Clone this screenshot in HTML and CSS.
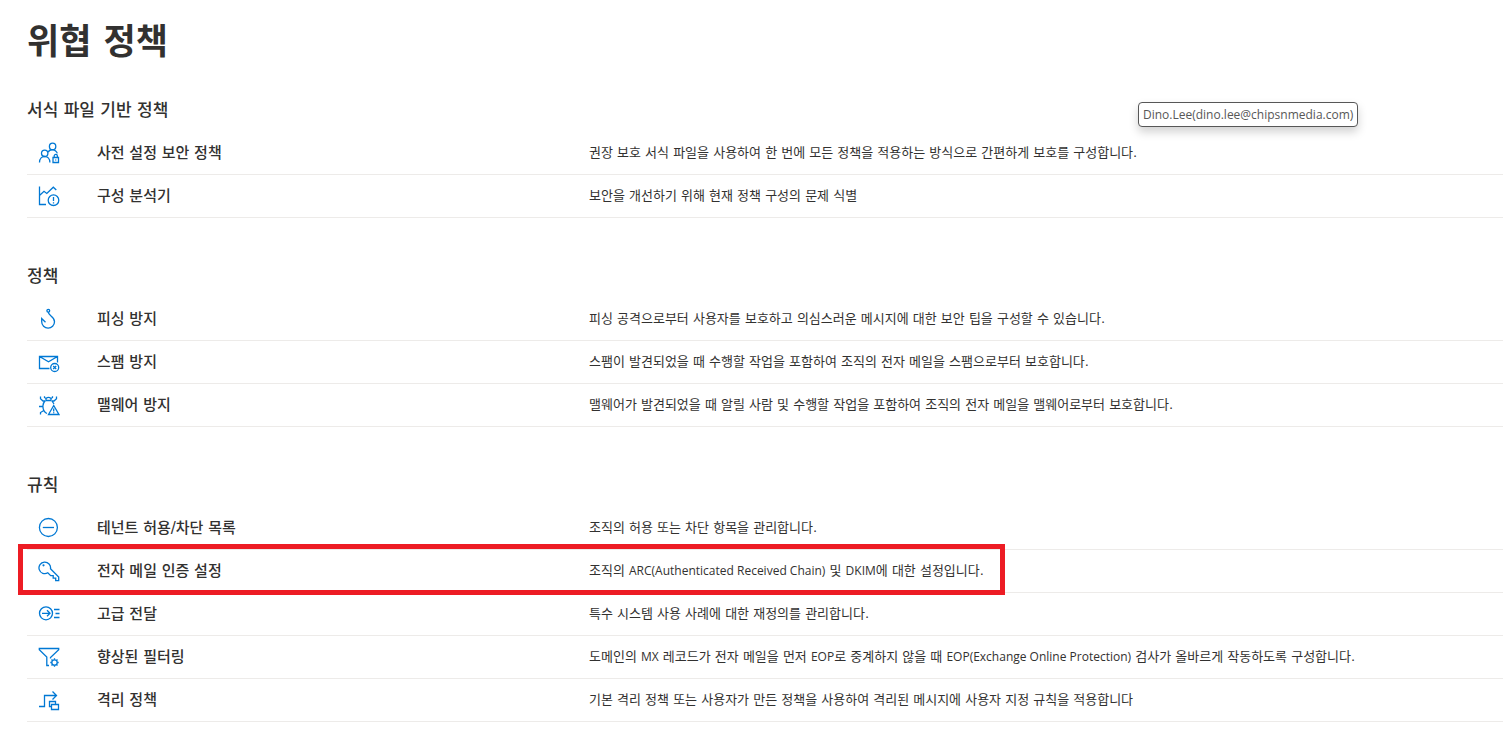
FILE: index.html
```
<!DOCTYPE html>
<html lang="ko">
<head>
<meta charset="utf-8">
<title>위협 정책</title>
<link rel="stylesheet" href="styles.css">
</head>
<body>
<main class="page">
  <h1 class="page-title">위협 정책</h1>
  <div class="tooltip" role="tooltip">Dino.Lee(dino.lee@chipsnmedia.com)</div>

  <section class="group">
    <h2 class="group-title" id="g1">서식 파일 기반 정책</h2>
    <table class="policies" aria-labelledby="g1">
      <tr>
        <td class="icon-cell"><svg class="icon" viewBox="0 0 22 22" aria-hidden="true"><circle cx="14.6" cy="4.4" r="3.2"/><circle cx="6.7" cy="11.3" r="3.2"/><path d="M1.5 20.5c0-8 10.4-8 10.4 0M10.3 10.2c1-3.4 7.6-3.4 9 1.2M15 15.500h5.500v5H15zM16.200 15.500v-1.500a1.600 1.600 0 0 1 3.200 0v1.500M17.700 17.500v1"/></svg></td>
        <td class="name-cell"><a class="name" href="#preset">사전 설정 보안 정책</a></td>
        <td class="desc-cell">권장 보호 서식 파일을 사용하여 한 번에 모든 정책을 적용하는 방식으로 간편하게 보호를 구성합니다.</td>
      </tr>
      <tr>
        <td class="icon-cell"><svg class="icon" viewBox="0 0 22 22" aria-hidden="true"><path d="M1.500 1.500v18H8M1.500 10.500L6 6.300l2.800 2.200 6.500-6.300 3 2.800M15.500 12v4M15.500 17.200v1.300"/><circle cx="15.500" cy="15.200" r="5.300"/></svg></td>
        <td class="name-cell"><a class="name" href="#analyzer">구성 분석기</a></td>
        <td class="desc-cell">보안을 개선하기 위해 현재 정책 구성의 문제 식별</td>
      </tr>
    </table>
  </section>

  <section class="group">
    <h2 class="group-title" id="g2">정책</h2>
    <table class="policies" aria-labelledby="g2">
      <tr>
        <td class="icon-cell"><svg class="icon" viewBox="0 0 22 22" aria-hidden="true"><circle cx="10.300" cy="2.700" r="1.400"/><path d="M10.300 4.100c0 3.900 6.200 4.300 6.200 9.700a6.400 6.400 0 0 1-12.800 0v-3.300l3.800 3.800"/></svg></td>
        <td class="name-cell"><a class="name" href="#phishing">피싱 방지</a></td>
        <td class="desc-cell">피싱 공격으로부터 사용자를 보호하고 의심스러운 메시지에 대한 보안 팁을 구성할 수 있습니다.</td>
      </tr>
      <tr>
        <td class="icon-cell"><svg class="icon" viewBox="0 0 22 22" aria-hidden="true"><path d="M11.500 17.500h-10v-12h18v6M1.500 5.500l9 5.200 9-5.200M15.200 15l3 3M18.200 15l-3 3"/><circle cx="16.700" cy="16.500" r="4"/></svg></td>
        <td class="name-cell"><a class="name" href="#spam">스팸 방지</a></td>
        <td class="desc-cell">스팸이 발견되었을 때 수행할 작업을 포함하여 조직의 전자 메일을 스팸으로부터 보호합니다.</td>
      </tr>
      <tr>
        <td class="icon-cell"><svg class="icon" viewBox="0 0 22 22" aria-hidden="true"><path d="M6.500 2.200v1.300l1.500 1v2h5v-2l1.500-1V2.200M8 4.500c1.500-1.400 3.500-1.400 5 0M2.500 2.500v2.300L5 7h2M18.500 2.500v2.300L16 7h-2M7.200 6.800c-2.700 2.600-3 7-1 10.400.7 1.200 1.500 1.800 2.800 2.300M1 12.500h3.800M2.500 20.500v-2l3.300-2M14 7l2 3M15.700 11.500l-5.200 9h10.400zM15.700 14.500v3M15.700 18.300v1"/></svg></td>
        <td class="name-cell"><a class="name" href="#malware">맬웨어 방지</a></td>
        <td class="desc-cell">맬웨어가 발견되었을 때 알릴 사람 및 수행할 작업을 포함하여 조직의 전자 메일을 맬웨어로부터 보호합니다.</td>
      </tr>
    </table>
  </section>

  <section class="group">
    <h2 class="group-title" id="g3">규칙</h2>
    <table class="policies" aria-labelledby="g3">
      <tr>
        <td class="icon-cell"><svg class="icon" viewBox="0 0 22 22" aria-hidden="true"><circle cx="10.400" cy="10.500" r="9"/><path d="M4.800 10.500H16"/></svg></td>
        <td class="name-cell"><a class="name" href="#tenant">테넌트 허용/차단 목록</a></td>
        <td class="desc-cell">조직의 허용 또는 차단 항목을 관리합니다.</td>
      </tr>
      <tr class="highlighted">
        <td class="icon-cell"><svg class="icon" viewBox="0 0 22 22" aria-hidden="true"><path d="M12.500 8.800l8.200 8.200v3.700h-3v-2.500h-2.500v-2.500h-2.500l-2.900-2.900A5.800 5.800 0 1 1 12.500 8.800z"/><circle class="solid" cx="5.500" cy="5.300" r="1.100"/></svg></td>
        <td class="name-cell"><a class="name" href="#auth">전자 메일 인증 설정</a></td>
        <td class="desc-cell">조직의 <span class="latin">ARC(Authenticated Received Chain)</span> 및 <span class="latin">DKIM</span>에 대한 설정입니다.</td>
      </tr>
      <tr>
        <td class="icon-cell"><svg class="icon" viewBox="0 0 22 22" aria-hidden="true"><circle cx="8" cy="10.300" r="6.500"/><path d="M4 10.300h8M9 7.300l3 3-3 3M16 6.500h5.500M17.500 10.500h4M16 14.500h5.500"/></svg></td>
        <td class="name-cell"><a class="name" href="#delivery">고급 전달</a></td>
        <td class="desc-cell">특수 시스템 사용 사례에 대한 재정의를 관리합니다.</td>
      </tr>
      <tr>
        <td class="icon-cell"><svg class="icon" viewBox="0 0 22 22" aria-hidden="true"><path d="M11 19.500H8.800V11L1.300 3.800V2.500h19.400v1.300L12.500 11.500v1"/><circle cx="16.500" cy="16.500" r="2.700"/><path d="M16.500 12.300v1.500M16.500 19.200v1.500M12.300 16.500h1.500M19.200 16.500h1.500M13.500 13.500l1.100 1.100M18.400 18.400l1.100 1.100M13.500 19.500l1.100-1.100M18.400 14.600l1.100-1.100"/></svg></td>
        <td class="name-cell"><a class="name" href="#filtering">향상된 필터링</a></td>
        <td class="desc-cell">도메인의 <span class="latin">MX</span> 레코드가 전자 메일을 먼저 <span class="latin">EOP</span>로 중계하지 않을 때 <span class="latin">EOP(Exchange Online Protection)</span> 검사가 올바르게 작동하도록 구성합니다.</td>
      </tr>
      <tr>
        <td class="icon-cell"><svg class="icon" viewBox="0 0 22 22" aria-hidden="true"><path d="M1 17.500h5.500v-11h12M14.500 2.500l4 4-4 4M13.500 17.500h-2v-5h6v3M13.500 15.500h7v5h-7z"/></svg></td>
        <td class="name-cell"><a class="name" href="#quarantine">격리 정책</a></td>
        <td class="desc-cell">기본 격리 정책 또는 사용자가 만든 정책을 사용하여 격리된 메시지에 사용자 지정 규칙을 적용합니다</td>
      </tr>
    </table>
  </section>
</main>
</body>
</html>
```
FILE: styles.css
```
*, *::after { box-sizing: border-box; }

body {
  margin: 0;
  background: #fff;
  color: #323130;
  font-family: "DejaVu Sans", "Noto Sans CJK KR", sans-serif;
  font-size: 13px;
}

.page {
  position: relative;
  padding: 18px 0 24px 27px;
}

.page-title {
  margin: 0 0 32px;
  font-size: 35px;
  line-height: 48px;
  font-weight: 700;
}

.tooltip {
  position: absolute;
  top: 102px;
  left: 1138px;
  padding: 0 4px;
  border: 1px solid #575757;
  border-radius: 4px;
  background: #fff;
  color: #575757;
  font-family: "Open Sans", sans-serif;
  font-size: 12px;
  line-height: 23px;
  white-space: nowrap;
  box-shadow: 0 5px 10px rgba(0, 0, 0, 0.18);
}

.group + .group { margin-top: 46px; }

.group-title {
  margin: 0 0 10px;
  font-size: 17px;
  line-height: 24px;
  font-weight: 500;
}

.policies {
  width: 100%;
  table-layout: fixed;
  border-collapse: separate;
  border-spacing: 0;
}

.policies td {
  height: 43px;
  padding: 0;
  border-bottom: 1px solid #edebe9;
  line-height: 20px;
  vertical-align: middle;
}

.policies .icon-cell { width: 70px; padding-left: 11px; }
.name-cell { width: 492px; }

.icon {
  display: block;
  width: 22px;
  height: 22px;
  fill: none;
  stroke: #0078d4;
  stroke-width: 1.3;
}

.icon .solid { fill: #0078d4; stroke: none; }

.name {
  color: inherit;
  font-size: 15px;
  font-weight: 500;
  text-decoration: none;
}

.latin {
  font-family: "Open Sans", sans-serif;
  font-size: 12px;
}

.highlighted .icon-cell { position: relative; }

.highlighted .icon-cell::after {
  content: "";
  position: absolute;
  top: -6px;
  left: -9px;
  width: 987px;
  height: 51px;
  border: 5px solid #ed1c24;
  pointer-events: none;
}
```
